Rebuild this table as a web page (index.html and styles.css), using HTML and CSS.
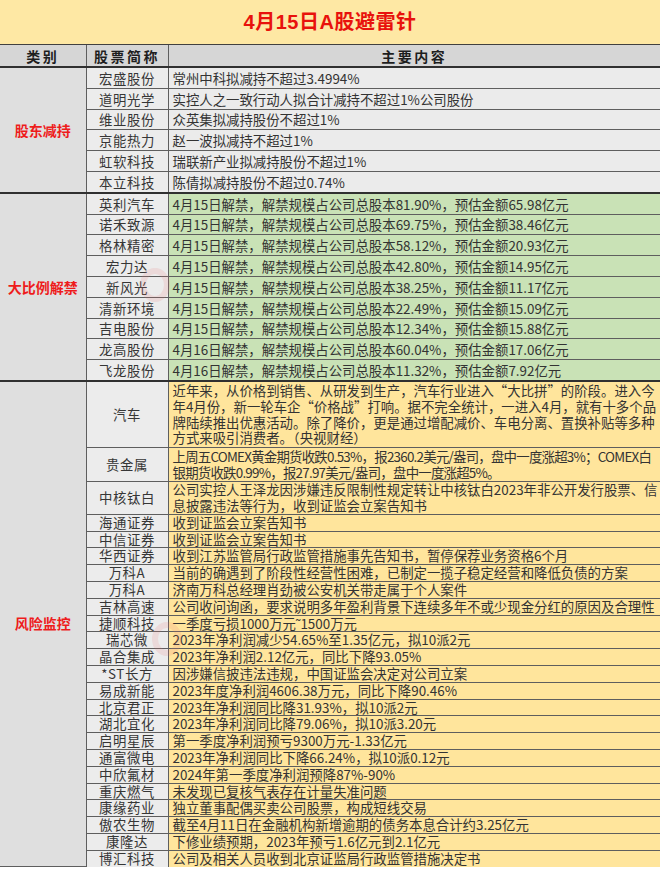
FILE: index.html
```html
<!DOCTYPE html>
<html lang="zh-CN">
<head>
<meta charset="utf-8">
<title>4月15日A股避雷针</title>
<link rel="stylesheet" href="styles.css">
</head>
<body>
<div class="page">
<table class="sheet">
  <colgroup><col class="c1"><col class="c2"><col class="c3"></colgroup>
  <tr class="title"><td colspan="3">4月15日A股避雷针</td></tr>
  <tr class="head"><th>类别</th><th>股票简称</th><th>主要内容</th></tr>

  <tr class="row sec"><td rowspan="6" class="cat">股东减持</td><td class="name">宏盛股份</td><td class="txt grey">常州中科拟减持不超过3.4994%</td></tr>
  <tr class="row"><td class="name">道明光学</td><td class="txt grey">实控人之一致行动人拟合计减持不超过1%公司股份</td></tr>
  <tr class="row"><td class="name">维业股份</td><td class="txt grey">众英集拟减持股份不超过1%</td></tr>
  <tr class="row"><td class="name">京能热力</td><td class="txt grey">赵一波拟减持不超过1%</td></tr>
  <tr class="row"><td class="name">虹软科技</td><td class="txt grey">瑞联新产业拟减持股份不超过1%</td></tr>
  <tr class="row"><td class="name">本立科技</td><td class="txt grey">陈倩拟减持股份不超过0.74%</td></tr>

  <tr class="row sec"><td rowspan="9" class="cat">大比例解禁</td><td class="name">英利汽车</td><td class="txt green">4月15日解禁，解禁规模占公司总股本81.90%，预估金额65.98亿元</td></tr>
  <tr class="row"><td class="name">诺禾致源</td><td class="txt green">4月15日解禁，解禁规模占公司总股本69.75%，预估金额38.46亿元</td></tr>
  <tr class="row"><td class="name">格林精密</td><td class="txt green">4月15日解禁，解禁规模占公司总股本58.12%，预估金额20.93亿元</td></tr>
  <tr class="row"><td class="name">宏力达</td><td class="txt green">4月15日解禁，解禁规模占公司总股本42.80%，预估金额14.95亿元</td></tr>
  <tr class="row"><td class="name">新风光</td><td class="txt green">4月15日解禁，解禁规模占公司总股本38.25%，预估金额11.17亿元</td></tr>
  <tr class="row"><td class="name">清新环境</td><td class="txt green">4月15日解禁，解禁规模占公司总股本22.49%，预估金额15.09亿元</td></tr>
  <tr class="row"><td class="name">吉电股份</td><td class="txt green">4月15日解禁，解禁规模占公司总股本12.34%，预估金额15.88亿元</td></tr>
  <tr class="row"><td class="name">龙高股份</td><td class="txt green">4月16日解禁，解禁规模占公司总股本60.04%，预估金额17.06亿元</td></tr>
  <tr class="row"><td class="name">飞龙股份</td><td class="txt green">4月16日解禁，解禁规模占公司总股本11.32%，预估金额7.92亿元</td></tr>

  <tr class="risk sec"><td rowspan="24" class="cat">风险监控</td><td class="name">汽车</td><td class="txt yellow four">近年来，从价格到销售、从研发到生产，汽车行业进入“大比拼”的阶段。进入今<br>年4月份，新一轮车企“价格战”打响。据不完全统计，一进入4月，就有十多个品<br>牌陆续推出优惠活动。除了降价，更是通过增配减价、车电分离、置换补贴等多种<br>方式来吸引消费者。（央视财经）</td></tr>
  <tr class="risk"><td class="name">贵金属</td><td class="txt yellow tight two">上周五COMEX黄金期货收跌0.53%，报2360.2美元/盎司，盘中一度涨超3%；COMEX白<br>银期货收跌0.99%，报27.97美元/盎司，盘中一度涨超5%。</td></tr>
  <tr class="risk"><td class="name">中核钛白</td><td class="txt yellow">公司实控人王泽龙因涉嫌违反限制性规定转让中核钛白2023年非公开发行股票、信<br>息披露违法等行为，收到证监会立案告知书</td></tr>
  <tr class="risk"><td class="name">海通证券</td><td class="txt yellow">收到证监会立案告知书</td></tr>
  <tr class="risk"><td class="name">中信证券</td><td class="txt yellow">收到证监会立案告知书</td></tr>
  <tr class="risk"><td class="name">华西证券</td><td class="txt yellow">收到江苏监管局行政监管措施事先告知书，暂停保荐业务资格6个月</td></tr>
  <tr class="risk"><td class="name">万科A</td><td class="txt yellow">当前的确遇到了阶段性经营性困难，已制定一揽子稳定经营和降低负债的方案</td></tr>
  <tr class="risk"><td class="name">万科A</td><td class="txt yellow">济南万科总经理肖劲被公安机关带走属于个人案件</td></tr>
  <tr class="risk"><td class="name">吉林高速</td><td class="txt yellow">公司收问询函，要求说明多年盈利背景下连续多年不或少现金分红的原因及合理性</td></tr>
  <tr class="risk"><td class="name">捷顺科技</td><td class="txt yellow">一季度亏损1000万元˜1500万元</td></tr>
  <tr class="risk"><td class="name">瑞芯微</td><td class="txt yellow">2023年净利润减少54.65%至1.35亿元，拟10派2元</td></tr>
  <tr class="risk"><td class="name">晶合集成</td><td class="txt yellow">2023年净利润2.12亿元，同比下降93.05%</td></tr>
  <tr class="risk"><td class="name">*ST长方</td><td class="txt yellow">因涉嫌信披违法违规，中国证监会决定对公司立案</td></tr>
  <tr class="risk"><td class="name">易成新能</td><td class="txt yellow">2023年度净利润4606.38万元，同比下降90.46%</td></tr>
  <tr class="risk"><td class="name">北京君正</td><td class="txt yellow">2023年净利润同比降31.93%，拟10派2元</td></tr>
  <tr class="risk"><td class="name">湖北宜化</td><td class="txt yellow">2023年净利润同比降79.06%，拟10派3.20元</td></tr>
  <tr class="risk"><td class="name">启明星辰</td><td class="txt yellow">第一季度净利润预亏9300万元-1.33亿元</td></tr>
  <tr class="risk"><td class="name">通富微电</td><td class="txt yellow">2023年净利润同比下降66.24%，拟10派0.12元</td></tr>
  <tr class="risk"><td class="name">中欣氟材</td><td class="txt yellow">2024年第一季度净利润预降87%-90%</td></tr>
  <tr class="risk"><td class="name">重庆燃气</td><td class="txt yellow">未发现已复核气表存在计量失准问题</td></tr>
  <tr class="risk"><td class="name">康缘药业</td><td class="txt yellow">独立董事配偶买卖公司股票，构成短线交易</td></tr>
  <tr class="risk"><td class="name">傲农生物</td><td class="txt yellow">截至4月11日在金融机构新增逾期的债务本息合计约3.25亿元</td></tr>
  <tr class="risk"><td class="name">康隆达</td><td class="txt yellow">下修业绩预期，2023年预亏1.6亿元到2.1亿元</td></tr>
  <tr class="risk last"><td class="name">博汇科技</td><td class="txt yellow">公司及相关人员收到北京证监局行政监管措施决定书</td></tr>
</table>
<div class="mark mark-a"></div>
<div class="mark mark-b"></div>
</div>
</body>
</html>
```

FILE: styles.css
```css
html, body {
  margin: 0;
  padding: 0;
  background: #ffffff;
}

.page {
  position: relative;
  width: 660px;
  height: 870px;
  overflow: hidden;
}

.sheet {
  width: 660px;
  table-layout: fixed;
  border-collapse: collapse;
  font-family: "Noto Sans CJK SC", sans-serif;
  color: #2b2b2b;
}

.c1 { width: 86px; }
.c2 { width: 82px; }
.c3 { width: 492px; }

.sheet td, .sheet th {
  border: 1px solid #5e5e5e;
  padding: 0;
  white-space: nowrap;
}

.title td {
  height: 44px;
  background: #fee8a4;
  color: #e8120c;
  font-family: "Liberation Sans", "Noto Sans CJK SC", sans-serif;
  font-size: 20px;
  font-weight: bold;
  text-align: center;
  letter-spacing: 0.5px;
  line-height: 24px;
  border-top: none;
  border-left: none;
  border-right: none;
  border-bottom: 1px solid #404040;
}

.head th {
  height: 21px;
  background: #d6d6d6;
  font-size: 14px;
  font-weight: bold;
  letter-spacing: 2.5px;
  color: #1e1e1e;
  text-align: center;
  line-height: 18px;
}

.head th:first-child { border-left: none; }
.head th:last-child { border-right: none; }

.cat {
  background: #dfdfdf;
  color: #ee1c1c;
  font-weight: bold;
  font-size: 14px;
  text-align: center;
  vertical-align: middle;
  border-left: none !important;
}

.name {
  background: #ececec;
  text-align: center;
  font-size: 13.4px;
  color: #363636;
  letter-spacing: 0.6px;
}

.txt {
  text-align: left;
  font-size: 13.4px;
  padding: 0 0 0 4px !important;
  border-right: none !important;
  color: #333333;
}

.tight { letter-spacing: -0.75px; }

.grey { background: #ebebeb; }
.green { background: #c9e2b6; }
.yellow { background: #ffe59c; }

.row td {
  height: 19.8px;
  line-height: 16px;
}

.risk td {
  line-height: 15.8px;
  height: 15.8px;
}

.risk td.four {
  padding-top: 1px !important;
  padding-bottom: 1px !important;
}

.risk td.two {
  padding-top: 1px !important;
  padding-bottom: 0.5px !important;
}

.sec td {
  border-top: 2px solid #303030;
}

.last td {
  border-bottom: none;
}

.mark {
  position: absolute;
  border-radius: 50%;
  pointer-events: none;
}

.mark-a {
  left: 140px;
  top: 268px;
  width: 30px;
  height: 34px;
  border: 6px solid rgba(230, 120, 120, 0.16);
  box-sizing: border-box;
}

.mark-b {
  left: 152px;
  top: 622px;
  width: 30px;
  height: 34px;
  border: 6px solid rgba(230, 120, 120, 0.16);
  box-sizing: border-box;
}
```
